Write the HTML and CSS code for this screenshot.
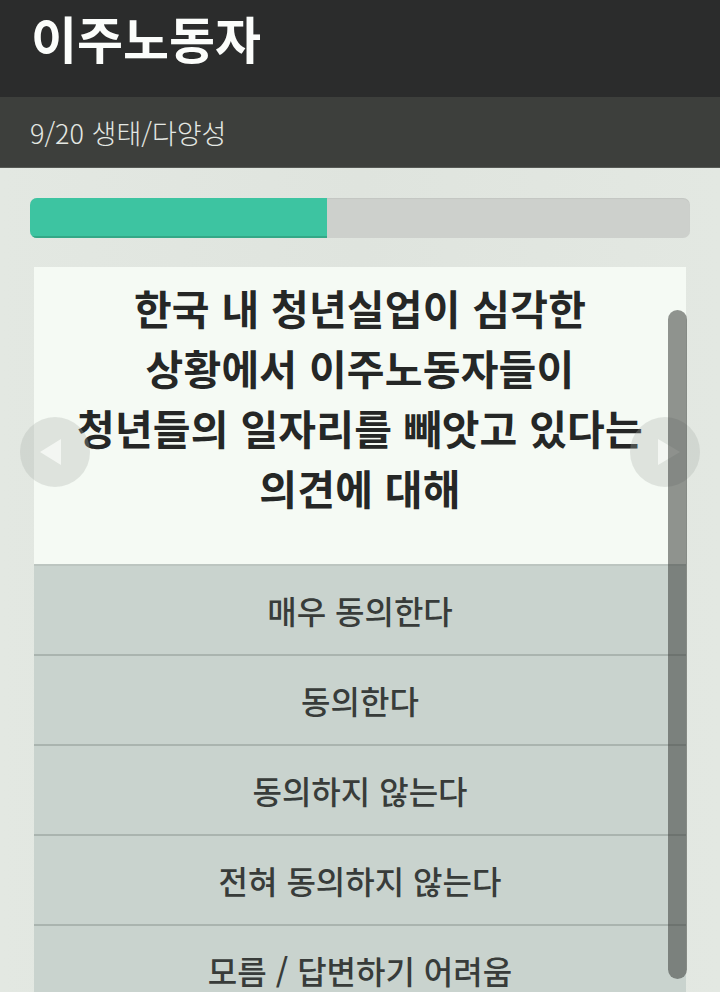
FILE: index.html
```html
<!DOCTYPE html>
<html lang="ko">
<head>
<meta charset="utf-8">
<title>이주노동자</title>
<link rel="stylesheet" href="styles.css">
</head>
<body>
<header class="topbar">
  <h1 class="title">이주노동자</h1>
</header>
<div class="subbar">9/20 생태/다양성</div>
<main class="main">
  <div class="progress"><div class="progress-fill" style="width:45%"></div></div>
  <section class="card">
    <div class="question">한국 내 청년실업이 심각한<br>상황에서 이주노동자들이<br>청년들의 일자리를 빼앗고 있다는<br>의견에 대해</div>
    <ul class="options">
      <li class="option">매우 동의한다</li>
      <li class="option">동의한다</li>
      <li class="option">동의하지 않는다</li>
      <li class="option">전혀 동의하지 않는다</li>
      <li class="option">모름 / 답변하기 어려움</li>
    </ul>
  </section>
  <button class="nav nav-prev" aria-label="이전">
    <svg width="70" height="70" viewBox="0 0 70 70"><path d="M20 35 L41 22 L41 48 Z" fill="#f3f6f2"/></svg>
  </button>
  <button class="nav nav-next" aria-label="다음">
    <svg width="70" height="70" viewBox="0 0 70 70"><path d="M50 35 L28 22 L28 48 Z" fill="#f3f6f2"/></svg>
  </button>
  <div class="scrollbar"></div>
</main>
</body>
</html>
```
FILE: styles.css
```css
html, body {
  margin: 0;
  padding: 0;
  height: 100%;
  overflow: hidden;
}
body {
  background: linear-gradient(90deg, #e3e8e2 0%, #dfe4de 50%, #e3e8e2 100%);
  font-family: "Noto Sans CJK KR", "Noto Sans", sans-serif;
  color: #2b2d2c;
}
.topbar {
  background: #2b2c2c;
  height: 97px;
  display: flex;
  align-items: center;
  padding-left: 31px;
  box-sizing: border-box;
}
.title {
  margin: 0;
  font-size: 50px;
  font-weight: 700;
  color: #fbfdfb;
  letter-spacing: 0;
  line-height: 1;
  margin-top: -24px;
}
.subbar {
  background: #3d3f3c;
  height: 71px;
  display: flex;
  align-items: center;
  padding-left: 30px;
  box-sizing: border-box;
  font-size: 27px;
  font-weight: 300;
  color: #e4e8e3;
  border-bottom: 1px solid #565955;
}
.main {
  position: relative;
  padding: 30px 30px 0;
}
.progress {
  height: 40px;
  background: #cdd0cc;
  border-radius: 7px;
  overflow: hidden;
  box-shadow: inset 0 1px 1px rgba(0,0,0,0.05);
}
.progress-fill {
  height: 100%;
  background: #3dc4a1;
  border-bottom: 2px solid #34a887;
  box-sizing: border-box;
}
.card {
  position: relative;
  margin: 29px 4px 0;
  background: #f5faf4;
}
.question {
  padding: 10px 8px 47px;
  text-align: center;
  font-size: 41px;
  font-weight: 700;
  line-height: 60px;
  color: #252726;
  letter-spacing: 0.2px;
}
.options {
  list-style: none;
  margin: 0;
  padding: 0;
  border-top: 2px solid #bcc5c0;
}
.option {
  height: 88px;
  display: flex;
  align-items: center;
  justify-content: center;
  background: #c9d3ce;
  border-bottom: 2px solid #aab4af;
  font-size: 32px;
  font-weight: 500;
  color: #383c3a;
}
.nav {
  position: absolute;
  z-index: 2;
  top: 249px;
  width: 70px;
  height: 70px;
  padding: 0;
  border: none;
  border-radius: 50%;
  background: rgba(170, 176, 170, 0.3);
  display: flex;
  align-items: center;
  justify-content: center;
}
.nav svg { display: block; }
.nav-prev { left: 20px; }
.nav-next { right: 20px; }
.scrollbar {
  position: absolute;
  z-index: 3;
  left: 668px;
  top: 142px;
  width: 19px;
  height: 669px;
  border-radius: 10px;
  background: rgba(58, 62, 58, 0.55);
}
```
